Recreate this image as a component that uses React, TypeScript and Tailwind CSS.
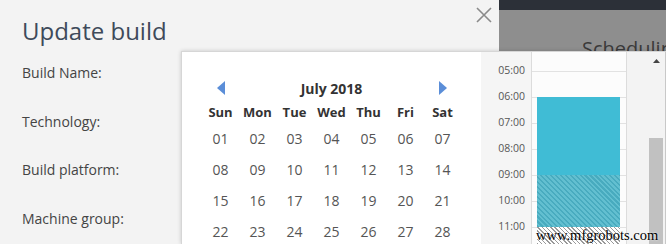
import React from "react";

const days = ["Sun", "Mon", "Tue", "Wed", "Thu", "Fri", "Sat"];
const weeks = [
  ["01", "02", "03", "04", "05", "06", "07"],
  ["08", "09", "10", "11", "12", "13", "14"],
  ["15", "16", "17", "18", "19", "20", "21"],
  ["22", "23", "24", "25", "26", "27", "28"],
];
const hours = ["05:00", "06:00", "07:00", "08:00", "09:00", "10:00", "11:00"];
const labels = ["Build Name:", "Technology:", "Build platform:", "Machine group:"];

export default function App() {
  return (
    <div className="relative w-[666px] h-[244px] overflow-hidden font-['Open_Sans',sans-serif]">
      <div className="flex h-full">
        {/* modal */}
        <div className="relative w-[499px] shrink-0 h-full bg-[#f3f3f3] pl-[22px]">
          <h1 className="pt-[15px] text-[24px] leading-[32px] text-[#3e4a5a]">Update build</h1>
          <div className="mt-[16px] flex flex-col">
            {labels.map((l) => (
              <div key={l} className="h-[48.7px] text-[14px] leading-[20px] text-[#444]">
                {l}
              </div>
            ))}
          </div>
          <svg className="absolute left-[476px] top-[7px]" width="16" height="16" viewBox="0 0 16 16">
            <path d="M1 1 L15 15 M15 1 L1 15" stroke="#8a8a8a" strokeWidth="1.6" fill="none" />
          </svg>
        </div>
        {/* background page */}
        <div className="flex-1 min-w-0 overflow-hidden flex flex-col">
          <div className="h-[10px] bg-[#2c3038]" />
          <div className="flex-1 bg-[#8e8e8e] pl-[83px] pt-[29px]">
            <div className="text-[20px] leading-[20px] text-[#3a3a3a] whitespace-nowrap">Scheduling</div>
          </div>
        </div>
      </div>

      {/* popup */}
      <div className="absolute left-[181px] top-[51px] right-0 bottom-0 flex bg-white border-l border-t border-[#d6d6d6] shadow-[0_0_4px_rgba(0,0,0,0.18)]">
        {/* calendar */}
        <div className="w-[299px] bg-white pl-[20px] pt-[26px]">
          <div className="flex h-[20px] items-center">
            <div className="w-[37px] flex justify-center">
              <svg width="8" height="14" viewBox="0 0 8 14">
                <path d="M8 0 L0 7 L8 14 Z" fill="#5b8ed8" />
              </svg>
            </div>
            <div className="w-[185px] text-center text-[14px] font-bold text-[#333]">July 2018</div>
            <div className="w-[37px] flex justify-center">
              <svg width="8" height="14" viewBox="0 0 8 14">
                <path d="M0 0 L8 7 L0 14 Z" fill="#5b8ed8" />
              </svg>
            </div>
          </div>
          <div className="mt-[5px] flex h-[20px] items-center">
            {days.map((d) => (
              <div key={d} className="w-[37px] text-center text-[13px] font-bold text-[#333]">
                {d}
              </div>
            ))}
          </div>
          {weeks.map((w, i) => (
            <div key={i} className="flex h-[31px] items-center">
              {w.map((d, j) => (
                <div key={j} className="w-[37px] text-center text-[14px] text-[#555]">
                  {d}
                </div>
              ))}
            </div>
          ))}
        </div>
        {/* time column */}
        <div className="w-[50px] bg-[#f5f5f5] pt-[6px]">
          {hours.map((h) => (
            <div key={h} className="h-[26px] flex items-center justify-end pr-[6px] text-[10.5px] text-[#555]">
              {h}
            </div>
          ))}
        </div>
        {/* grid */}
        <div className="relative w-[95px] border-l border-[#dcdcdc] bg-[#fcfcfc] pt-[19px]">
          {hours.map((h) => (
            <div key={h} className="h-[26px] border-t border-[#e2e2e2]" />
          ))}
          <div className="absolute left-[5px] top-[45px] w-[83px] bottom-0 flex flex-col">
            <div className="h-[78px] bg-[#40bcd5]" />
            <div className="h-[52px] bg-[repeating-linear-gradient(45deg,#48abbf_0px,#48abbf_1.5px,#62bfd0_1.5px,#62bfd0_3.5px)]" />
            <div className="flex-1 bg-[repeating-linear-gradient(45deg,#9a9a9a_0px,#9a9a9a_1px,#ffffff_1px,#ffffff_3px)]" />
          </div>
        </div>
        {/* scroll area */}
        <div className="flex-1 flex justify-end border-l border-[#dcdcdc] bg-[#f3f3f3] border-r border-r-[#c8c8c8]">
          <div className="w-[17px] flex flex-col items-center pr-[1px]">
            <svg className="mt-[7px]" width="7" height="4" viewBox="0 0 7 4">
              <path d="M0 4 L3.5 0 L7 4 Z" fill="#444" />
            </svg>
            <div className="mt-[75px] w-[14px] flex-1 bg-[#c1c1c1]" />
          </div>
        </div>
      </div>

      {/* watermark */}
      <div className="absolute left-[536px] top-[226px] font-['Liberation_Serif',serif] text-[14.5px] leading-[18px] text-black [text-shadow:0_0_2px_#fff]">
        www.mfgrobots.com
      </div>
    </div>
  );
}
